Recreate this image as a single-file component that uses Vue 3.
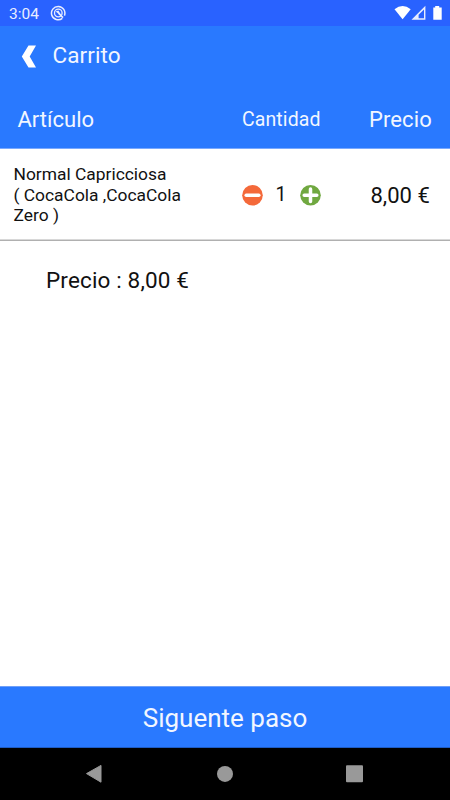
<script setup>
import { ref, computed } from 'vue'

const unitPrice = 8
const quantity = ref(1)
const total = computed(() => (unitPrice * quantity.value).toFixed(2).replace('.', ',') + ' €')
const decrease = () => { if (quantity.value > 1) quantity.value-- }
const increase = () => { quantity.value++ }
</script>

<template>
  <div class="screen">
    <div class="status">
      <span class="time">3:04</span>
      <svg class="notice" width="16" height="16" viewBox="0 0 16 16">
        <path d="M12.3 13.4A6.7 6.7 0 1 1 14.4 10.6" fill="none" stroke="#e8edff" stroke-width="1.5" />
        <circle cx="8.3" cy="8" r="3.8" fill="none" stroke="#e8edff" stroke-width="1.3" />
        <path d="M5.6 6.6 8.4 5.4 12 11.6Z" fill="#e8edff" />
        <path d="M8.6 8.2 13 12.6" stroke="#e8edff" stroke-width="1.6" />
      </svg>
      <svg class="signals" width="50" height="16" viewBox="0 0 50 16">
        <path d="M0.5 4.2Q8.6-2.2 16.7 4.2L8.6 14.3Z" fill="#fff" />
        <path fill-rule="evenodd" d="M17.5 14.7 31.4 .8V14.7ZM24.6 13.3H30V4.6L24.6 9.7Z" fill="#e8edff" />
        <path d="M39.3 2.4H41.2V0.9H45.2V2.4H47.7V14.8H39.3Z" fill="#fff" />
      </svg>
    </div>
    <header class="toolbar">
      <svg class="back" width="16" height="24" viewBox="0 0 16 24">
        <path d="M7.5 1.5H15L8.7 12.5 15 23.5H7.5L.8 12.5Z" fill="#fff" />
      </svg>
      <h1>Carrito</h1>
    </header>
    <div class="columns">
      <span class="article">Artículo</span>
      <span class="amount">Cantidad</span>
      <span class="price">Precio</span>
    </div>
    <div class="item">
      <div class="name">Normal Capricciosa<br>( CocaCola ,CocaCola<br>Zero )</div>
      <div class="stepper">
        <svg class="button" width="21" height="21" viewBox="0 0 21 21" @click="decrease">
          <circle cx="10.5" cy="10.3" r="10.3" fill="#f4693a" />
          <path d="M4.2 10.3H16.8" stroke="#fff" stroke-width="3.5" stroke-linecap="round" />
        </svg>
        <span class="count">{{ quantity }}</span>
        <svg class="button" width="21" height="21" viewBox="0 0 21 21" @click="increase">
          <circle cx="10.5" cy="10.3" r="10.3" fill="#70a840" />
          <path d="M4.2 10.3H16.8M10.5 4V16.6" stroke="#fff" stroke-width="3.5" stroke-linecap="round" />
        </svg>
      </div>
      <div class="cost">{{ total }}</div>
    </div>
    <main class="summary">Precio : {{ total }}</main>
    <div class="next">Siguente paso</div>
    <nav class="navigation">
      <svg width="450" height="52" viewBox="0 0 450 52">
        <path d="M86.5 25.6 101 17.4V34.2Z" fill="#999" stroke="#999" stroke-linejoin="round" />
        <circle cx="225" cy="25.9" r="8" fill="#999" />
        <rect x="346" y="17.3" width="17" height="17" rx="1" fill="#999" />
      </svg>
    </nav>
  </div>
</template>

<style>
body { margin: 0; background: #fff; }
</style>

<style scoped>
.screen {
  width: 450px;
  height: 800px;
  display: flex;
  flex-direction: column;
  overflow: hidden;
  background: #fff;
  color: #111;
  font-family: Roboto, sans-serif;
  white-space: nowrap;
}
.status {
  height: 26px;
  flex: none;
  display: flex;
  box-sizing: border-box;
  padding: 5px 6px 0 9px;
  background: #2962ff;
  color: #e8edff;
}
.time { width: 41px; font-size: 15.5px; line-height: 18px; }
.signals { margin-left: auto; }
.toolbar {
  height: 61px;
  flex: none;
  display: flex;
  box-sizing: border-box;
  padding: 18px 0 0 21px;
  background: #2979ff;
  color: #f2f6ff;
}
h1 { margin: -3px 0 0 15.5px; font-size: 22.5px; font-weight: 400; line-height: 28px; letter-spacing: 0.1px; }
.columns {
  height: 62px;
  flex: none;
  display: grid;
  grid-template-columns: 224px 127px 1fr;
  box-sizing: border-box;
  padding: 19px 0 0 18px;
  border-bottom: 1px solid #79a9ff;
  background: #2979ff;
  color: #f2f6ff;
  line-height: 28px;
  font-size: 22px;
}
.article { margin-left: -0.5px; }
.amount { font-size: 19.5px; letter-spacing: 0.1px; }
.price { letter-spacing: 0.1px; }
.item {
  height: 92px;
  flex: none;
  display: grid;
  grid-template-columns: 228px 129px 1fr;
  box-sizing: border-box;
  padding-left: 13.5px;
  border-bottom: 1px solid #b0b0b0;
  box-shadow: inset 0 -1px #d8d8d8;
}
.name { padding-top: 15px; font-size: 17.4px; line-height: 20.5px; }
.stepper { display: flex; padding-top: 36px; }
.button { flex: none; cursor: pointer; }
.count { width: 37px; margin-top: -3px; text-align: center; font-size: 19.5px; line-height: 26px; }
.cost { padding-top: 33px; font-size: 22px; line-height: 28px; }
.summary { flex: 1; padding: 25px 0 0 46px; font-size: 22.5px; line-height: 28px; letter-spacing: 0.15px; }
.next {
  height: 62px;
  flex: none;
  box-sizing: border-box;
  border-top: 1px solid #6f9ff8;
  border-bottom: 1px solid #1e5cc4;
  background: #2979ff;
  color: #f2f6ff;
  text-align: center;
  font-size: 26px;
  line-height: 62px;
}
.navigation { height: 52px; flex: none; background: #000; }
.navigation svg { display: block; }
</style>
